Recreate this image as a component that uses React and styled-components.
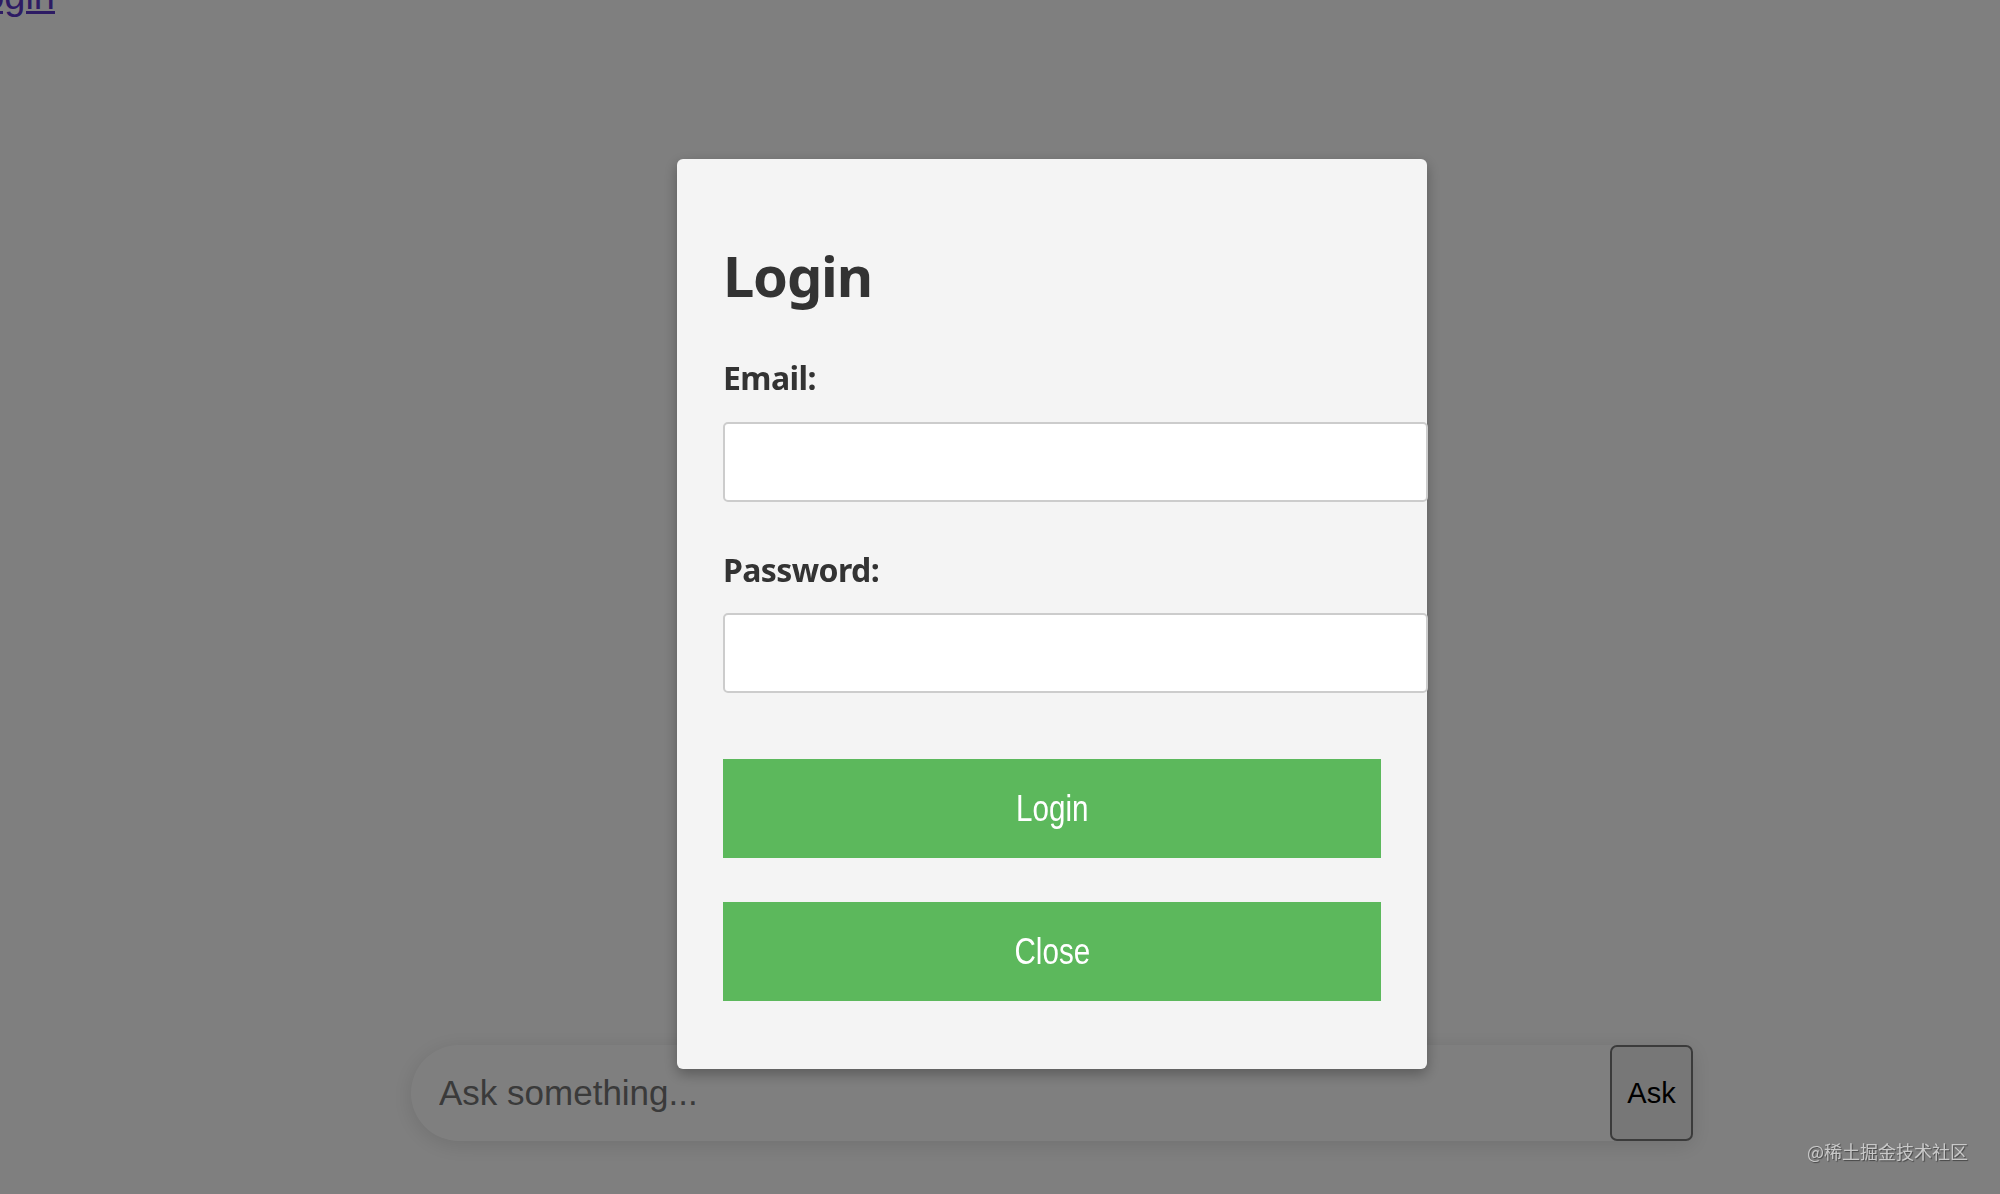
import React from "react";
import styled, { createGlobalStyle } from "styled-components";

const GlobalStyle = createGlobalStyle`
  html, body {
    margin: 0;
    padding: 0;
    background: #ffffff;
    overflow: hidden;
  }
  * {
    box-sizing: border-box;
  }
`;

const Page = styled.div`
  min-height: 100vh;
  display: flex;
  flex-direction: column;
  font-family: "Liberation Sans", Arial, sans-serif;
`;

const TopLink = styled.a`
  align-self: flex-start;
  margin: -25px 0 0 -38px;
  font-size: 38px;
  color: #5a36c8;
  text-decoration: underline;
`;

const ChatDock = styled.div`
  margin-top: auto;
  padding: 0 0 53px 104px;
  display: flex;
  justify-content: center;
`;

const ChatBar = styled.form`
  width: 1282px;
  height: 96px;
  display: flex;
  border-radius: 48px 8px 8px 48px;
  box-shadow: 0 4px 22px rgba(0, 0, 0, 0.12);
  background: #ffffff;
`;

const ChatInput = styled.input`
  flex: 1;
  height: 100%;
  border: none;
  outline: none;
  background: transparent;
  padding: 0 0 0 28px;
  font-family: "Liberation Sans", Arial, sans-serif;
  font-size: 35px;
  color: #222;
  &::placeholder {
    color: #757575;
  }
`;

const AskButton = styled.button`
  width: 83px;
  height: 96px;
  padding: 0;
  background: #efefef;
  border: 2px solid #767676;
  border-radius: 7px;
  font-family: "Liberation Sans", Arial, sans-serif;
  font-size: 29px;
  color: #000;
`;

const Overlay = styled.div`
  position: fixed;
  inset: 0;
  background: rgba(0, 0, 0, 0.5);
  display: flex;
  justify-content: center;
  align-items: flex-start;
  padding: 159px 0 0 104px;
`;

const Modal = styled.div`
  width: 750px;
  padding: 46px;
  background: #f4f4f4;
  border-radius: 6px;
  box-shadow: 0 5px 14px rgba(0, 0, 0, 0.3);
  font-family: "Noto Sans", "Open Sans", sans-serif;
  color: #333;
`;

const Title = styled.h2`
  margin: 42px 0 0;
  font-size: 56px;
  line-height: 56px;
  font-weight: 700;
  letter-spacing: -1.2px;
`;

const Label = styled.label`
  display: block;
  margin-top: ${(props) => props.gap};
  font-size: 32px;
  line-height: 32px;
  font-weight: 700;
  letter-spacing: -0.6px;
`;

const Field = styled.input`
  display: block;
  width: calc(100% + 47px);
  height: 80px;
  margin-top: ${(props) => props.gap};
  padding: 0 22px;
  background: #ffffff;
  border: 2px solid #cccccc;
  border-radius: 5px;
  outline: none;
  font-size: 32px;
`;

const ActionButton = styled.button`
  display: flex;
  align-items: center;
  justify-content: center;
  width: 100%;
  height: 99px;
  margin-top: ${(props) => props.gap};
  margin-bottom: ${(props) => props.after || "0"};
  padding: 0;
  border: none;
  background: #5cb85c;
  color: #ffffff;
  font-family: "Liberation Sans", Arial, sans-serif;
  font-size: 37px;
`;

// the reference renders this text in a narrow face
const NarrowText = styled.span`
  display: inline-block;
  transform: scaleX(0.8);
`;

const Watermark = styled.div`
  position: fixed;
  right: 32px;
  bottom: 30px;
  font-family: "Noto Sans CJK SC", sans-serif;
  font-size: 18px;
  color: #c9c9c9;
  text-shadow: 1px 1px 1px rgba(0, 0, 0, 0.45);
`;

const App = () => {
  return (
    <>
      <GlobalStyle />
      <Page>
        <TopLink href="#">Login</TopLink>
        <ChatDock>
          <ChatBar onSubmit={(e) => e.preventDefault()}>
            <ChatInput placeholder="Ask something..." />
            <AskButton type="submit">Ask</AskButton>
          </ChatBar>
        </ChatDock>
      </Page>
      <Overlay>
        <Modal>
          <Title>Login</Title>
          <Label gap="59px">Email:</Label>
          <Field type="email" gap="28px" />
          <Label gap="52px">Password:</Label>
          <Field type="password" gap="27px" />
          <ActionButton gap="66px">
            <NarrowText>Login</NarrowText>
          </ActionButton>
          <ActionButton gap="44px" after="22px">
            <NarrowText>Close</NarrowText>
          </ActionButton>
        </Modal>
      </Overlay>
      <Watermark>@稀土掘金技术社区</Watermark>
    </>
  );
};

export default App;
